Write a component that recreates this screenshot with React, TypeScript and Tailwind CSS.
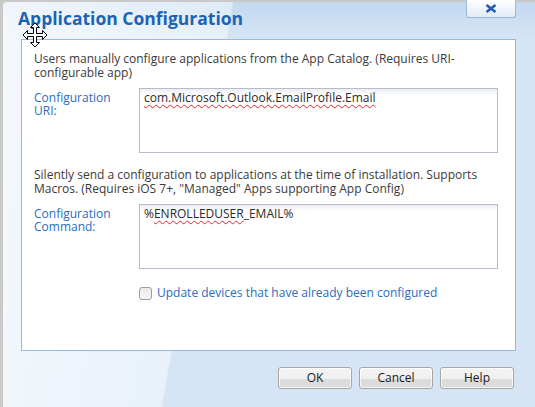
import React from "react";

const font = { fontFamily: '"Open Sans", "Noto Sans", sans-serif' };

function MoveCursor() {
  return (
    <svg width="26" height="26" viewBox="0 0 26 26" className="absolute left-[22px] top-[22px]">
      <polygon
        points="13,1 17.5,5.5 14.5,5.5 14.5,11.5 20.5,11.5 20.5,8.5 25,13 20.5,17.5 20.5,14.5 14.5,14.5 14.5,20.5 17.5,20.5 13,25 8.5,20.5 11.5,20.5 11.5,14.5 5.5,14.5 5.5,17.5 1,13 5.5,8.5 5.5,11.5 11.5,11.5 11.5,5.5 8.5,5.5"
        fill="#fff"
        stroke="#000"
        strokeWidth="1"
        strokeLinejoin="miter"
      />
    </svg>
  );
}

function Btn({ label }: { label: string }) {
  return (
    <div className="w-[74px] h-[22px] rounded-[3px] border border-[#a7a7a7] bg-[linear-gradient(to_bottom,#f3f3f3_0%,#f0f0f0_55%,#dcdcdc_56%,#dcdcdc_100%)] flex items-center justify-center text-[12px] text-[#1a1a1a] shadow-[inset_0_0_0_1px_rgba(255,255,255,0.7)]">
      {label}
    </div>
  );
}

export default function App() {
  return (
    <div className="w-[535px] h-[407px] bg-[#c9c9c9] relative overflow-hidden" style={font}>
      <div className="ml-[3px] mt-[2px] h-[405px] rounded-tl-[4px] bg-[linear-gradient(100deg,rgba(255,255,255,0.75)_0%,rgba(255,255,255,0.45)_38%,rgba(255,255,255,0)_38.3%),linear-gradient(to_bottom,#c2d9f0_0px,#d6e5f5_38px,#d6e5f5_100%)] flex flex-col">
        {/* title row */}
        <div className="h-[37px] flex justify-between items-start">
          <div className="pl-[15px] pt-[4px] text-[17.5px] font-bold text-[#1b64b5] leading-[24px]">
            Application Configuration
          </div>
          <div className="-mt-[2px] mr-[19px] w-[50px] h-[18px] rounded-b-[3px] border border-t-0 border-[#9fb7d2] bg-[linear-gradient(to_bottom,#ffffff,#e3ecf7)] flex items-center justify-center">
            <svg width="12" height="9" viewBox="0 0 12 9">
              <path d="M1.5 1 L10.5 8 M10.5 1 L1.5 8" stroke="#1d5fae" strokeWidth="2.6" strokeLinecap="butt" />
            </svg>
          </div>
        </div>
        {/* white panel */}
        <div className="ml-[18px] mr-[19px] h-[312px] bg-white border border-[#97b9e4] pl-[12px] pr-[16px] pt-[12px] text-[12px] leading-[14px] text-[#3a3a3a]">
          <div className="whitespace-nowrap">Users manually configure applications from the App Catalog. (Requires URI-</div>
          <div className="whitespace-nowrap">configurable app)</div>

          <div className="flex mt-[8px]">
            <div className="w-[105px] pt-[3px] leading-[13px] text-[#2b6cc0]">
              <div>Configuration</div>
              <div>URI:</div>
            </div>
            <div className="w-[359px] h-[65px] border border-[#b7bccb] bg-[linear-gradient(to_bottom,#eceef2_0px,#ffffff_6px)] pl-[4px] pt-[2px] text-[#2a2a2a]">
              <span className="underline decoration-wavy decoration-[#e0262b] decoration-[1px] underline-offset-[2px]">
                com.Microsoft.Outlook.EmailProfile.Email
              </span>
            </div>
          </div>

          <div className="mt-[15px] whitespace-nowrap">Silently send a configuration to applications at the time of installation. Supports</div>
          <div className="whitespace-nowrap">Macros. (Requires iOS 7+, "Managed" Apps supporting App Config)</div>

          <div className="flex mt-[8px]">
            <div className="w-[105px] pt-[3px] leading-[13px] text-[#2b6cc0]">
              <div>Configuration</div>
              <div>Command:</div>
            </div>
            <div className="w-[359px] h-[65px] border border-[#b7bccb] bg-[linear-gradient(to_bottom,#eceef2_0px,#ffffff_6px)] pl-[4px] pt-[2px] text-[#2a2a2a]">
              %
              <span className="underline decoration-wavy decoration-[#e0262b] decoration-[1px] underline-offset-[2px]">ENROLLEDUSER</span>
              _EMAIL%
            </div>
          </div>

          <div className="flex items-center mt-[17px] ml-[105px]">
            <div className="w-[13px] h-[13px] rounded-[3px] border border-[#9c9c9c] bg-[linear-gradient(to_bottom,#e9e9e9,#f7f7f7)]" />
            <div className="ml-[5px] text-[#2b6cc0]">Update devices that have already been configured</div>
          </div>
        </div>
        {/* buttons */}
        <div className="flex justify-end gap-[7px] mt-[16px] mr-[21px]">
          <Btn label="OK" />
          <Btn label="Cancel" />
          <Btn label="Help" />
        </div>
      </div>
      <MoveCursor />
    </div>
  );
}
